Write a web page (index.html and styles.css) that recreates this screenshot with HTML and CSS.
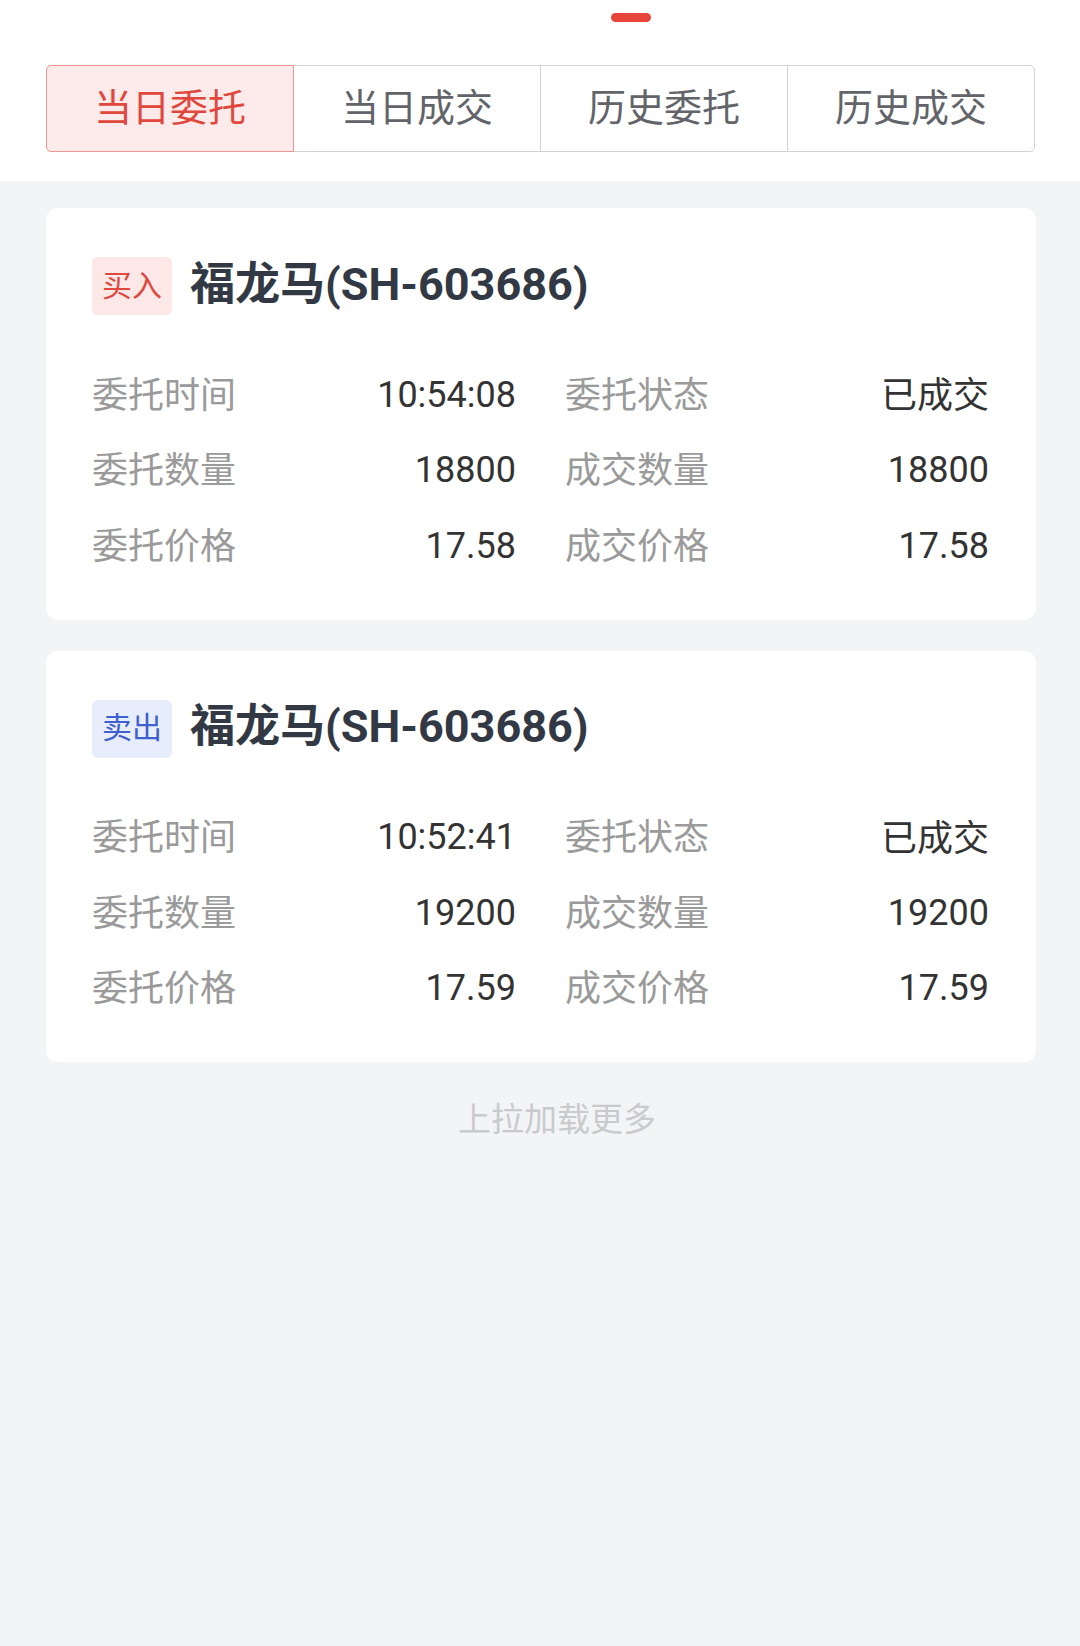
FILE: index.html
```html
<!DOCTYPE html>
<html lang="zh-CN">
<head>
<meta charset="utf-8">
<title>委托</title>
<link rel="stylesheet" href="styles.css">
</head>
<body>
<header class="header">
  <div class="indicator"></div>
  <nav class="tabs">
    <div class="tab tab-active">当日委托</div>
    <div class="tab">当日成交</div>
    <div class="tab">历史委托</div>
    <div class="tab">历史成交</div>
  </nav>
</header>
<main class="list">
  <section class="card">
    <div class="card-head">
      <span class="badge badge-buy">买入</span>
      <span class="stock">福龙马(SH-603686)</span>
    </div>
    <div class="grid">
      <div class="cell"><span class="label">委托时间</span><span class="value">10:54:08</span></div>
      <div class="cell"><span class="label">委托状态</span><span class="value value-cjk">已成交</span></div>
      <div class="cell"><span class="label">委托数量</span><span class="value">18800</span></div>
      <div class="cell"><span class="label">成交数量</span><span class="value">18800</span></div>
      <div class="cell"><span class="label">委托价格</span><span class="value">17.58</span></div>
      <div class="cell"><span class="label">成交价格</span><span class="value">17.58</span></div>
    </div>
  </section>
  <section class="card">
    <div class="card-head">
      <span class="badge badge-sell">卖出</span>
      <span class="stock">福龙马(SH-603686)</span>
    </div>
    <div class="grid">
      <div class="cell"><span class="label">委托时间</span><span class="value">10:52:41</span></div>
      <div class="cell"><span class="label">委托状态</span><span class="value value-cjk">已成交</span></div>
      <div class="cell"><span class="label">委托数量</span><span class="value">19200</span></div>
      <div class="cell"><span class="label">成交数量</span><span class="value">19200</span></div>
      <div class="cell"><span class="label">委托价格</span><span class="value">17.59</span></div>
      <div class="cell"><span class="label">成交价格</span><span class="value">17.59</span></div>
    </div>
  </section>
  <div class="more">上拉加载更多</div>
</main>
</body>
</html>
```

FILE: styles.css
```css
* { box-sizing: border-box; }
html, body {
  margin: 0;
  padding: 0;
}
body {
  background: #f3f4f6;
  font-family: Roboto, "Noto Sans CJK SC", sans-serif;
  min-height: 1646px;
}
.header {
  background: #ffffff;
  height: 181px;
  padding-top: 13px;
}
.indicator {
  width: 40px;
  height: 9px;
  border-radius: 5px;
  background: #e8453a;
  margin-left: 611px;
}
.tabs {
  display: flex;
  margin: 43px 45px 0 46px;
  height: 87px;
}
.tab {
  flex: 1;
  display: flex;
  align-items: center;
  justify-content: center;
  border: 1px solid #d2d2d4;
  margin-left: -1px;
  padding-bottom: 8px;
  font-size: 38px;
  color: #626469;
  background: #ffffff;
  position: relative;
}
.tab:first-child {
  margin-left: 0;
  border-radius: 5px 0 0 5px;
}
.tab:last-child {
  border-radius: 0 5px 5px 0;
}
.tab-active {
  background: #fdeaea;
  border-color: #ee958f;
  color: #e0473d;
  z-index: 1;
}
.list {
  padding: 27px 44px 0 46px;
}
.card {
  background: #ffffff;
  border-radius: 12px;
  padding: 49px 47px 36px 46px;
  margin-bottom: 31px;
}
.card-head {
  display: flex;
  align-items: center;
  height: 58px;
  margin-bottom: 42px;
}
.badge {
  width: 80px;
  height: 58px;
  border-radius: 6px;
  display: flex;
  align-items: center;
  justify-content: center;
  padding-bottom: 7px;
  font-size: 30px;
  margin-right: 18px;
}
.badge-buy {
  background: #fde8e8;
  color: #e0473d;
}
.badge-sell {
  background: #e8edfb;
  color: #3e5fcf;
}
.stock {
  font-size: 45px;
  font-weight: 700;
  color: #323944;
  padding-bottom: 12px;
}
.grid {
  display: grid;
  grid-template-columns: 1fr 1fr;
  column-gap: 49px;
}
.cell {
  display: flex;
  justify-content: space-between;
  align-items: center;
  height: 75.5px;
  font-size: 36px;
}
.label {
  color: #9a9a9a;
  margin-bottom: 6px;
}
.value {
  color: #333333;
}
.value-cjk {
  margin-bottom: 5px;
}
.more {
  padding-top: 5px;
  text-align: center;
  padding-left: 32px;
  font-size: 33px;
  line-height: 44px;
  color: #c9cacd;
}
```
